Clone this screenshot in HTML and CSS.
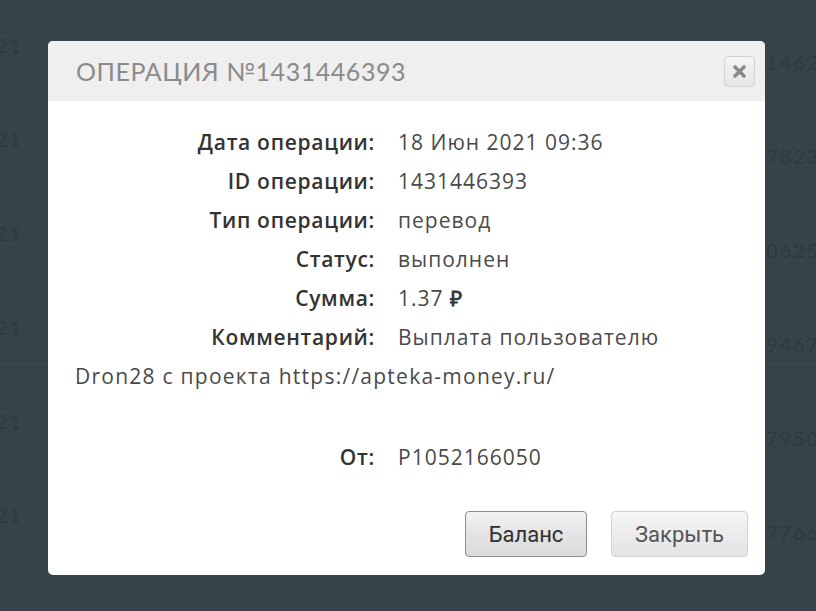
FILE: index.html
```html
<html>

<head>
  <meta charset="utf-8">
  <link rel="stylesheet" href="styles.css">
</head>

<body>
  <!-- history table behind the dialog -->
  <div class="history">
    <div class="hrow"><span class="hdate">21</span><span class="hnum">14623</span></div>
    <div class="hrow"><span class="hdate">21</span><span class="hnum">78231</span></div>
    <div class="hrow"><span class="hdate">21</span><span class="hnum">06254</span></div>
    <div class="hrow"><span class="hdate">21</span><span class="hnum">94674</span></div>
    <div class="hrow"><span class="hdate">21</span><span class="hnum">79501</span></div>
    <div class="hrow"><span class="hdate">21</span><span class="hnum">77663</span></div>
  </div>

  <div class="modal">
    <div class="modal-head">
      <span class="modal-title">Операция №1431446393</span>
      <button class="btn-close" type="button">
        <svg width="15" height="15" viewBox="0 0 15 15">
          <path d="M3 3 L12 12 M12 3 L3 12" stroke="#8a8a8a" stroke-width="3.6" stroke-linecap="round" />
        </svg>
      </button>
    </div>

    <div class="modal-body">
      <div class="line"><span class="lbl">Дата операции:</span>18 Июн 2021 09:36</div>
      <div class="line"><span class="lbl">ID операции:</span>1431446393</div>
      <div class="line"><span class="lbl">Тип операции:</span>перевод</div>
      <div class="line"><span class="lbl">Статус:</span>выполнен</div>
      <div class="line"><span class="lbl">Сумма:</span>1.37 <span class="rub">₽</span></div>
      <div class="line"><span class="lbl">Комментарий:</span>Выплата пользователю <span class="latin">Dron28 с проекта https://apteka-money.ru/</span></div>
      <div class="line from"><span class="lbl">От:</span>P1052166050</div>
    </div>

    <div class="modal-foot">
      <button class="button1" type="button">Баланс</button>
      <button class="button2" type="button">Закрыть</button>
    </div>
  </div>
</body>

</html>
```

FILE: styles.css
```css
body {
  margin: 0;
  background-color: #36434a;
  font-family: 'Open Sans', sans-serif;
  overflow: hidden;
}

.history {
  margin-top: -15px;
}

.hrow {
  display: flex;
  align-items: flex-start;
  height: 93px;
  border-bottom: 1px solid #313e45;
  font-family: 'Lato', sans-serif;
  font-size: 20px;
  line-height: 24px;
  letter-spacing: 2px;
  color: #2e3a41;
}

.hdate {
  flex-shrink: 0;
  width: 770px;
  margin-top: 48px;
  margin-left: -4px;
}

.hnum {
  margin-top: 65px;
  white-space: nowrap;
}

.modal {
  position: absolute;
  left: 48px;
  top: 41px;
  width: 717px;
  height: 534px;
  background-color: #ffffff;
  border-radius: 5px;
  display: flex;
  flex-direction: column;
  overflow: hidden;
}

.modal-head {
  height: 60px;
  background-color: #efefef;
  display: flex;
  align-items: center;
  justify-content: space-between;
  padding: 0 10px 0 28px;
}

.modal-title {
  font-family: 'Lato', sans-serif;
  font-size: 25px;
  text-transform: uppercase;
  letter-spacing: 0.55px;
  color: #8b8b8b;
}

.btn-close {
  width: 31px;
  height: 31px;
  padding: 0;
  border: 1px solid #d3d3d3;
  border-radius: 4px;
  background: linear-gradient(#f4f4f4, #e6e6e6);
  display: flex;
  align-items: center;
  justify-content: center;
}

.modal-body {
  flex: 1;
  padding: 22px 40px 0 27px;
  font-size: 21px;
  line-height: 39px;
  letter-spacing: 1px;
  color: #4a4a4a;
}

.lbl {
  float: left;
  width: 300px;
  margin-right: 23px;
  text-align: right;
  font-weight: 600;
  letter-spacing: 0.7px;
  color: #333333;
}

.latin {
  letter-spacing: 1.25px;
}

.line::after {
  content: "";
  display: block;
  clear: both;
}

.line.from {
  margin-top: 42px;
}

.rub {
  font-weight: 600;
  color: #3a3a3a;
}

.modal-foot {
  display: flex;
  justify-content: flex-end;
  gap: 24px;
  padding: 0 17px 18px 0;
}

.button1,
.button2 {
  height: 46px;
  border-radius: 4px;
  font-family: 'Roboto', sans-serif;
  font-size: 22px;
}

.button1 {
  width: 122px;
  border: 1px solid #8d8d8d;
  background: linear-gradient(#f3f3f3, #e4e4e4 50%, #dadada);
  color: #303030;
}

.button2 {
  width: 137px;
  border: 1px solid #d2d2d2;
  background: linear-gradient(#f6f6f6, #ececec 50%, #e4e4e4);
  color: #555555;
}
```
